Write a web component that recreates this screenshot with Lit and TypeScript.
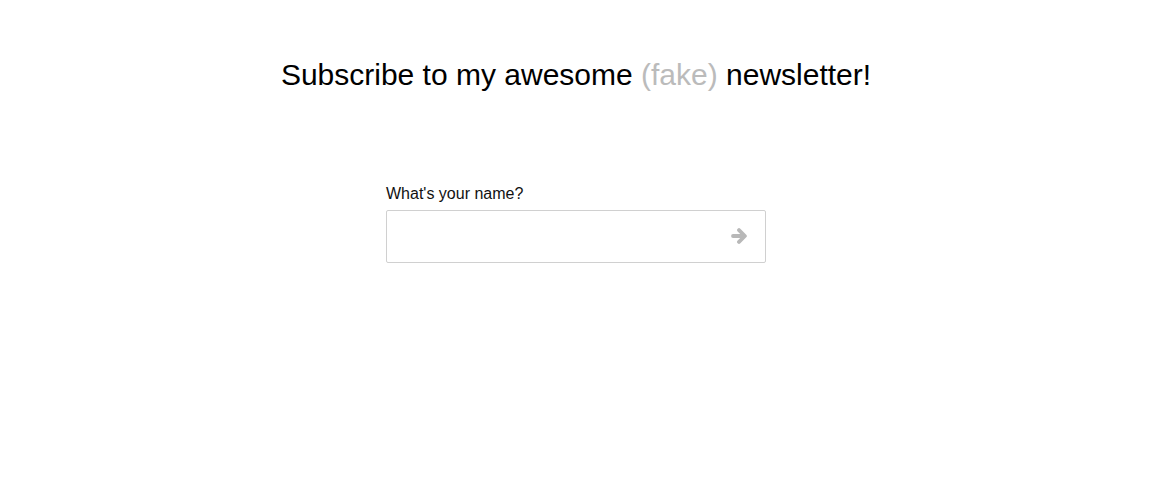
import { LitElement, html, css } from "lit";
import { customElement, state } from "lit/decorators.js";

@customElement("app-root")
export class AppRoot extends LitElement {
  static styles = css`
    :host {
      display: block;
      padding: 57px 24px 24px 0;
      color: #000;
      font-family: "Liberation Sans", Arial, Helvetica, sans-serif;
    }
    .title {
      margin: 0;
      font-size: 30px;
      line-height: 36px;
      font-weight: 400;
      text-align: center;
    }
    .muted {
      color: #bbb;
    }
    .form {
      max-width: 380px;
      margin: 92px auto 0;
    }
    .label {
      display: block;
      color: #111;
      font-size: 16px;
      line-height: 18px;
      margin-bottom: 7px;
    }
    .field {
      display: flex;
      box-sizing: border-box;
      height: 53px;
      border: 1px solid #d0d0d0;
      border-radius: 2px;
    }
    .input {
      flex: 1;
      min-width: 0;
      padding: 0 16px;
      border: 0;
      outline: 0;
      background: none;
      font: inherit;
    }
    .next {
      display: grid;
      place-items: center;
      width: 52px;
      padding: 0 0 1px;
      border: 0;
      background: none;
      color: #b8b8b8;
      cursor: pointer;
    }
    .icon {
      width: 16px;
      height: 16px;
      fill: none;
      stroke: currentColor;
      stroke-width: 3.8;
      stroke-linecap: round;
      stroke-linejoin: round;
    }
  `;

  @state() private name = "";

  render() {
    return html`
      <h1 class="title">
        Subscribe to my awesome <span class="muted">(fake)</span> newsletter!
      </h1>
      <form class="form" @submit=${(e: Event) => e.preventDefault()}>
        <label class="label" for="name">What's your name?</label>
        <div class="field">
          <input
            class="input"
            id="name"
            type="text"
            .value=${this.name}
            @input=${(e: Event) => (this.name = (e.target as HTMLInputElement).value)}
          />
          <button class="next" type="submit" aria-label="Next">
            <svg class="icon" viewBox="0 0 16 16" aria-hidden="true">
              <path d="M2 8H13.500M8 2.100L13.900 8L8 13.900" />
            </svg>
          </button>
        </div>
      </form>
    `;
  }
}
